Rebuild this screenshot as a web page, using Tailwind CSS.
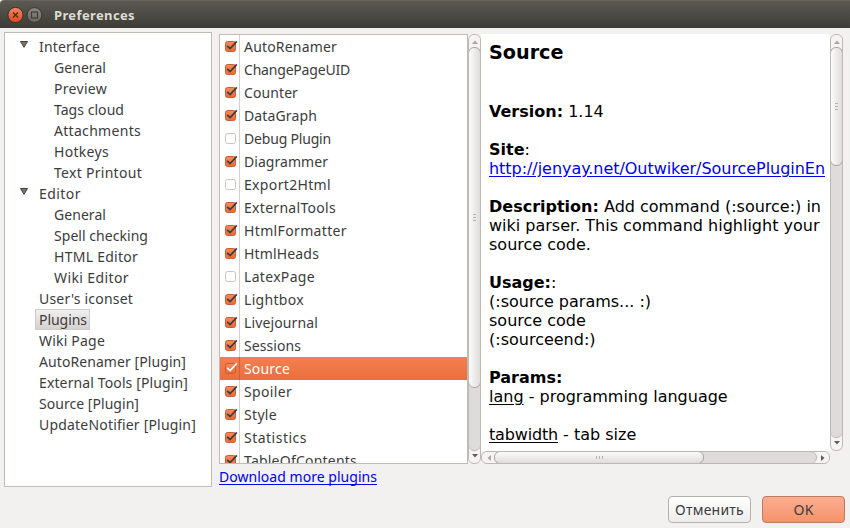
<!DOCTYPE html>
<html lang="en">
<head>
<meta charset="utf-8">
<title>Preferences</title>
<script src="https://cdn.jsdelivr.net/npm/@tailwindcss/browser@4"></script>
</head>
<body class="w-[850px] h-[528px] overflow-hidden bg-[#f2f1f0] font-['Noto_Sans',sans-serif] text-[14px] text-[#3c3c3c]">
<svg width="0" height="0" class="absolute">
  <defs>
    <linearGradient id="boxFill" x1="0" y1="0" x2="0" y2="1"><stop offset="0" stop-color="#f58a60"/><stop offset="1" stop-color="#ec6a38"/></linearGradient>
    <symbol id="check" viewBox="0 0 14 14"><rect x="1.5" y="2.5" width="10" height="10" rx="2" fill="url(#boxFill)" stroke="#cf5a2c"/><path d="M3.2 6.8 L6.1 9.6 L12.8 2.4" fill="none" stroke="currentColor" stroke-width="1.7"/></symbol>
    <symbol id="empty" viewBox="0 0 14 14"><rect x="1.5" y="2.5" width="10" height="10" rx="2" fill="#fff" stroke="#c8c4c0"/></symbol>
  </defs>
</svg>
<header class="h-[28px] flex items-center bg-linear-to-b from-[#5b5952] to-[#3d3c37] rounded-tl-[4px] border-t border-[#66645c] pl-[7px]">
  <svg width="36" height="18" viewBox="0 0 36 18" class="shrink-0">
    <defs>
      <linearGradient id="close" x1="0" y1="0" x2="0" y2="1"><stop offset="0" stop-color="#f58563"/><stop offset="1" stop-color="#e0491b"/></linearGradient>
      <linearGradient id="max" x1="0" y1="0" x2="0" y2="1"><stop offset="0" stop-color="#8b8981"/><stop offset="1" stop-color="#6a6860"/></linearGradient>
    </defs>
    <circle cx="8.5" cy="9" r="7.6" fill="url(#close)" stroke="#35332e"/>
    <path d="M6 6.5l5 5M11 6.5l-5 5" stroke="#5c2412" stroke-width="1.3"/>
    <circle cx="27.5" cy="9" r="7.4" fill="url(#max)" stroke="#35332e"/>
    <rect x="24.5" y="6" width="6" height="6" fill="none" stroke="#3d3b36" stroke-width="1.2"/>
  </svg>
  <h1 class="ml-[11px] font-bold text-[13px] leading-[18px] text-[#dfdbd2]"><span data-w="81" class="whitespace-nowrap">Preferences</span></h1>
</header>
<main class="flex h-[460px] pl-[4px] pt-[4px]">
  <nav id="tree" class="w-[208px] h-[455px] shrink-0 bg-white border border-[#bfbbb6] pt-[3px]"></nav>
  <section class="ml-[7px] pt-[2px]">
    <div class="flex h-[430px]">
      <div class="w-[249px] h-[430px] bg-white border border-[#bfbbb6] overflow-hidden" id="plugins"></div>
      <div class="w-[13px] h-[430px] flex flex-col rounded-[6px] border border-[#bcb8b3] bg-[#dedcda] overflow-hidden">
        <div class="h-[14px] shrink-0 bg-[#f5f4f3] flex items-center justify-center"><svg width="6" height="4"><path d="M0 4L3 .5L6 4Z" fill="#aaa7a3"/></svg></div>
        <div class="h-[341px] -mt-[2px] -mx-px shrink-0 rounded-[6px] border border-[#aaa6a1] bg-linear-to-r from-[#fbfbfb] to-[#dfdddb] flex flex-col gap-[2px] items-center justify-center"><i class="w-[3px] h-px bg-[#b5b2ae]"></i><i class="w-[3px] h-px bg-[#b5b2ae]"></i><i class="w-[3px] h-px bg-[#b5b2ae]"></i></div>
        <div class="h-[61px] shrink-0"></div>
        <div class="flex-1 bg-[#f5f4f3] flex items-center justify-center relative"><span class="absolute -top-[7px] left-0 w-[11px] h-[9px] rounded-b-[6px] bg-[#dedcda] border-b border-[#bcb8b3]"></span><svg width="6" height="4"><path d="M0 0L3 3.5L6 0Z" fill="#605e5a"/></svg></div>
      </div>
      <div class="w-[349px]">
        <article class="h-[417px] bg-white overflow-hidden pl-[8px] text-black font-['DejaVu_Sans',sans-serif] text-[16px] leading-[19px] whitespace-nowrap">
          <h2 class="font-bold text-[19.2px] leading-[23px] pt-[7px] mb-[38px]">Source</h2>
          <p class="mb-[19px]"><b>Version:</b> 1.14</p>
          <p class="mb-[19px]"><b>Site</b>:<br><a class="text-[#0000e6] underline underline-offset-2"><span data-w="336">http://jenyay.net/Outwiker/SourcePluginEn</span></a></p>
          <p class="mb-[19px]"><b>Description:</b> <span data-w="217">Add command (:source:) in</span><br>wiki parser. This command highlight your<br>source code.</p>
          <p class="mb-[19px]"><b>Usage:</b>:<br>(:source params... :)<br>source code<br>(:sourceend:)</p>
          <p class="mb-[19px]"><b>Params:</b><br><u class="underline-offset-2">lang</u> - programming language</p>
          <p><u class="underline-offset-2" data-w="69">tabwidth</u> - tab size</p>
        </article>
        <div class="h-[13px] flex rounded-[6px] border border-[#bcb8b3] bg-[#dedcda] overflow-hidden">
          <div class="w-[14px] shrink-0 bg-[#f5f4f3] flex items-center justify-center"><svg width="4" height="6"><path d="M4 0L.5 3L4 6Z" fill="#aaa7a3"/></svg></div>
          <div class="w-[210px] -ml-[2px] -my-px shrink-0 rounded-[6px] border border-[#aaa6a1] bg-linear-to-b from-[#fbfbfb] to-[#dfdddb] flex gap-[2px] items-center justify-center"><i class="h-[3px] w-px bg-[#b5b2ae]"></i><i class="h-[3px] w-px bg-[#b5b2ae]"></i><i class="h-[3px] w-px bg-[#b5b2ae]"></i></div>
          <div class="w-[111px] shrink-0"></div>
          <div class="flex-1 bg-[#f5f4f3] flex items-center justify-center relative"><span class="absolute -left-[7px] top-0 h-[11px] w-[9px] rounded-r-[6px] bg-[#dedcda] border-r border-[#bcb8b3]"></span><svg width="4" height="6" class="ml-[2px]"><path d="M0 0L3.5 3L0 6Z" fill="#605e5a"/></svg></div>
        </div>
      </div>
      <div class="w-[13px] h-[417px] flex flex-col rounded-[6px] border border-[#bcb8b3] bg-[#dedcda] overflow-hidden">
        <div class="h-[14px] shrink-0 bg-[#f5f4f3] flex items-center justify-center"><svg width="6" height="4"><path d="M0 4L3 .5L6 4Z" fill="#aaa7a3"/></svg></div>
        <div class="h-[119px] -mt-[2px] -mx-px shrink-0 rounded-[6px] border border-[#aaa6a1] bg-linear-to-r from-[#fbfbfb] to-[#dfdddb] flex flex-col gap-[2px] items-center justify-center"><i class="w-[3px] h-px bg-[#b5b2ae]"></i><i class="w-[3px] h-px bg-[#b5b2ae]"></i><i class="w-[3px] h-px bg-[#b5b2ae]"></i></div>
        <div class="h-[270px] shrink-0"></div>
        <div class="flex-1 bg-[#f5f4f3] flex items-center justify-center relative"><span class="absolute -top-[7px] left-0 w-[11px] h-[9px] rounded-b-[6px] bg-[#dedcda] border-b border-[#bcb8b3]"></span><svg width="6" height="4"><path d="M0 0L3 3.5L6 0Z" fill="#605e5a"/></svg></div>
      </div>
    </div>
    <a class="block mt-[3px] w-[158px] h-[18px] leading-[19px] text-[#0000ee] border-b border-[#0000ee] whitespace-nowrap"><span data-w="158">Download more plugins</span></a>
  </section>
</main>
<footer class="flex justify-end gap-[11px] pt-[8px] pr-[5px]">
  <button class="w-[83px] h-[27px] rounded-[4px] border border-[#b5b1ac] bg-linear-to-b from-white to-[#ececeb] flex items-center justify-center"><span data-w="69" class="whitespace-nowrap">Отменить</span></button>
  <button class="w-[83px] h-[27px] rounded-[4px] border border-[#c07a5f] bg-linear-to-b from-[#fcae91] to-[#f6926b] flex items-center justify-center"><span data-w="20">OK</span></button>
</footer>
<script>
  // [label, nesting level, label width, expandable]
  const tree = [
    ["Interface",0,61,1],["General",1,52],["Preview",1,53],["Tags cloud",1,70],["Attachments",1,87],["Hotkeys",1,55],["Text Printout",1,88],
    ["Editor",0,42,1],["General",1,52],["Spell checking",1,94],["HTML Editor",1,84],["Wiki Editor",1,75],
    ["User's iconset",0,94],["Plugins",0,48],["Wiki Page",0,66],["AutoRenamer [Plugin]",0,147],["External Tools [Plugin]",0,149],["Source [Plugin]",0,100],["UpdateNotifier [Plugin]",0,157]
  ];
  document.getElementById("tree").innerHTML = tree.map(([t, level, w, open]) => `
    <div class="flex h-[21px] whitespace-nowrap leading-[21px]">
      <span class="${level ? "w-[45px]" : "w-[30px]"} shrink-0">${open ? '<svg width="8" height="7" class="ml-[15px] mt-[5px]"><path d="M.5 .5H7.5L4 6.3Z" fill="#77746f" stroke="#44423e"/></svg>' : ""}</span>
      <span class="${t === "Plugins" ? "pl-[3px] pr-[2px] w-[55px] border border-[#d0cdc9] leading-[19px] bg-linear-to-b from-[#f1f0ef] to-[#d5d2cf]" : "pl-[4px]"}"><span data-w="${w}">${t}</span></span>
    </div>`).join("");

  // [label, label width]
  const plugins = [["AutoRenamer",93],["ChangePageUID",106],["Counter",54],["DataGraph",73],["Debug Plugin",87],["Diagrammer",84],["Export2Html",87],["ExternalTools",92],["HtmlFormatter",103],["HtmlHeads",75],["LatexPage",71],["Lightbox",60],["Livejournal",74],["Sessions",57],["Source",46],["Spoiler",48],["Style",33],["Statistics",63],["TableOfContents",113]];
  const off = ["Debug Plugin", "Export2Html", "LatexPage"];
  document.getElementById("plugins").innerHTML = plugins.map(([t, w]) => {
    const sel = t === "Source";
    return `<div class="flex h-[23px] whitespace-nowrap ${sel ? "bg-linear-to-b from-[#f37f50] to-[#eb6e3c] text-white" : ""}">
      <span class="w-[20px] shrink-0 border-r pl-[4px] pt-[4px] ${sel ? "border-[#c96539] text-white" : "border-[#d3d0cd] text-[#3c3c3c]"}"><svg width="14" height="14"><use href="#${off.includes(t) ? "empty" : "check"}"/></svg></span>
      <span class="pl-[4px] leading-[24px]"><span data-w="${w}">${t}</span></span>
    </div>`;
  }).join("");

  function fitLabels() {
    document.querySelectorAll("[data-w]").forEach(el => {
      el.style.letterSpacing = "0px";
      const diff = +el.dataset.w - el.getBoundingClientRect().width;
      el.style.letterSpacing = (diff / el.textContent.length).toFixed(3) + "px";
    });
  }
  window.addEventListener("load", () => {
    fitLabels();
    document.fonts.ready.then(fitLabels);
    requestAnimationFrame(fitLabels);
  });
</script>
</body>
</html>
